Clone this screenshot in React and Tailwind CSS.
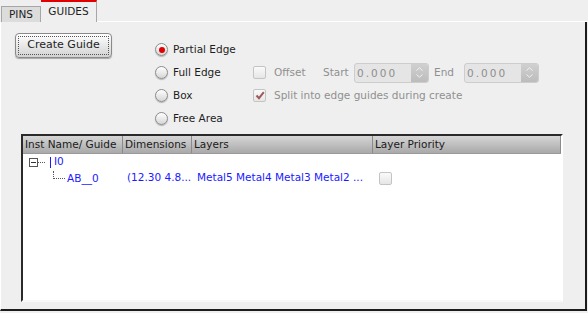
import React from "react";

const Radio = ({ checked, label }) => (
  <div className="flex items-center h-[23px]">
    <span className="w-[13px] h-[13px] rounded-full border border-[#8c8c8c] bg-linear-to-b from-white to-[#d6d6d6] shadow-[0_1px_1px_rgba(0,0,0,0.25)] flex items-center justify-center">
      {checked && <span className="w-[6px] h-[6px] rounded-full bg-[#e00000]" />}
    </span>
    <span className="ml-[5px] text-[#1e1e1e]">{label}</span>
  </div>
);

const Check = ({ checked }) => (
  <span className="w-[13px] h-[13px] rounded-[2px] border border-[#c4c4c4] bg-linear-to-b from-[#fafafa] to-[#e6e6e6] flex items-center justify-center">
    {checked && (
      <svg width="10" height="9" viewBox="0 0 10 9">
        <path d="M1.5 4.5 L4 7.2 L8.8 1.2" stroke="#a05858" strokeWidth="2" fill="none" />
      </svg>
    )}
  </span>
);

const SpinBox = () => (
  <div className="w-[75px] h-[20px] rounded-[3px] border border-[#cdcdcd] bg-[#e5e5e5] flex">
    <span className="flex-1 pl-[2px] tracking-[2px] text-[#8e8e8e] leading-[18px]">0.000</span>
    <span className="w-[17px] h-full rounded-r-[2px] bg-linear-to-b from-[#d0d0d0] to-[#bcbcbc] flex flex-col items-center justify-center gap-[3px]">
      <svg width="7" height="4" viewBox="0 0 7 4"><path d="M0.5 3.5 L3.5 0.8 L6.5 3.5" stroke="#f2f2f2" fill="none" /></svg>
      <svg width="7" height="4" viewBox="0 0 7 4"><path d="M0.5 0.5 L3.5 3.2 L6.5 0.5" stroke="#f2f2f2" fill="none" /></svg>
    </span>
  </div>
);

const columns = [
  { name: "Inst Name/ Guide", w: "w-[99px]" },
  { name: "Dimensions", w: "w-[69px]" },
  { name: "Layers", w: "w-[181px]" },
  { name: "Layer Priority", w: "w-[189px]" },
];

export default function App() {
  return (
    <div className="w-[588px] h-[313px] bg-[#efefef] font-['DejaVu_Sans',sans-serif] text-[10.5px] text-[#1e1e1e] flex flex-col overflow-hidden">
      {/* tabs */}
      <div className="h-[22px] flex items-end pl-px">
        <div className="w-[40px] h-[16px] border border-b-0 border-[#a6a6a6] bg-[#dcdcdc] flex items-center justify-center">
          PINS
        </div>
        <div className="w-[56px] h-[22px] border-t-2 border-t-[#e00000] border-r border-[#a6a6a6] bg-[#efefef] flex items-center justify-center pb-[1px]">
          GUIDES
        </div>
        <div className="flex-1 w-[490px] h-px bg-white" />
      </div>

      {/* panel */}
      <div className="w-[587px] h-[289px] border-l border-white border-r-2 border-r-[#1c1c1c] border-b-2 border-b-[#1c1c1c] flex flex-col">
        <div className="h-[112px] flex items-start">
          <button className="ml-[14px] mt-[11px] w-[97px] h-[25px] rounded-[4px] border border-[#8a8a8a] bg-linear-to-b from-white to-[#d2d2d2] shadow-[0_1px_1px_rgba(0,0,0,0.3)] p-[2px]">
            <span className="w-full h-full border border-dotted border-[#555] flex items-center justify-center text-[11px]">
              Create Guide
            </span>
          </button>

          <div className="ml-[43px] mt-[16px] w-[98px] flex flex-col">
            <Radio checked label="Partial Edge" />
            <Radio label="Full Edge" />
            <Radio label="Box" />
            <Radio label="Free Area" />
          </div>

          <div className="mt-[39px] flex flex-col text-[#909090]">
            <div className="h-[23px] flex items-center">
              <Check />
              <span className="ml-[8px] w-[49px]">Offset</span>
              <span className="w-[31px]">Start</span>
              <SpinBox />
              <span className="ml-[5px] w-[30px]">End</span>
              <SpinBox />
            </div>
            <div className="h-[23px] flex items-center">
              <Check checked />
              <span className="ml-[8px]">Split into edge guides during create</span>
            </div>
          </div>
        </div>

        {/* table */}
        <div className="ml-[20px] w-[542px] h-[168px] border-2 border-t-[#2a2a2a] border-l-[#2a2a2a] border-r-white border-b-[#f8f8f8] bg-white flex flex-col">
          <div className="h-[18px] flex bg-linear-to-b from-[#d6d6d6] to-[#a9a9a9] border-b border-[#9a9a9a]">
            {columns.map((c, i) => (
              <div
                key={c.name}
                className={`${c.w} h-full flex items-center pl-[2px] text-[#1a1a1a] ${i > 0 ? "border-l border-[#8a8a8a]" : ""} ${i === 3 ? "border-r border-[#7a7a7a]" : ""}`}
              >
                {c.name}
              </div>
            ))}
          </div>

          <div className="h-[16px] flex items-center text-[#1a1aff]">
            <div className="w-[99px] flex items-center pl-[6px]">
              <span className="w-[9px] h-[9px] border border-[#555] bg-white flex items-center justify-center">
                <span className="w-[5px] h-px bg-[#333]" />
              </span>
              <span className="w-[7px] border-t border-dotted border-[#555]" />
              <span className="ml-[5px] w-px h-[11px] bg-[#1a1aff]" />
              <span className="ml-[3px]">I0</span>
            </div>
          </div>

          <div className="h-[16px] flex items-center text-[#1a1aff]">
            <div className="w-[99px] h-full flex items-start pl-[30px]">
              <span className="mt-px w-[12px] h-[8px] border-l border-b border-dotted border-[#555]" />
              <span className="ml-[2px] leading-[16px]">AB__0</span>
            </div>
            <div className="w-[69px] pl-[5px] whitespace-nowrap">(12.30 4.8...</div>
            <div className="w-[181px] pl-[6px] whitespace-nowrap">Metal5 Metal4 Metal3 Metal2 ...</div>
            <div className="w-[189px] pl-[7px] flex items-center">
              <Check />
            </div>
          </div>
        </div>
      </div>
    </div>
  );
}
